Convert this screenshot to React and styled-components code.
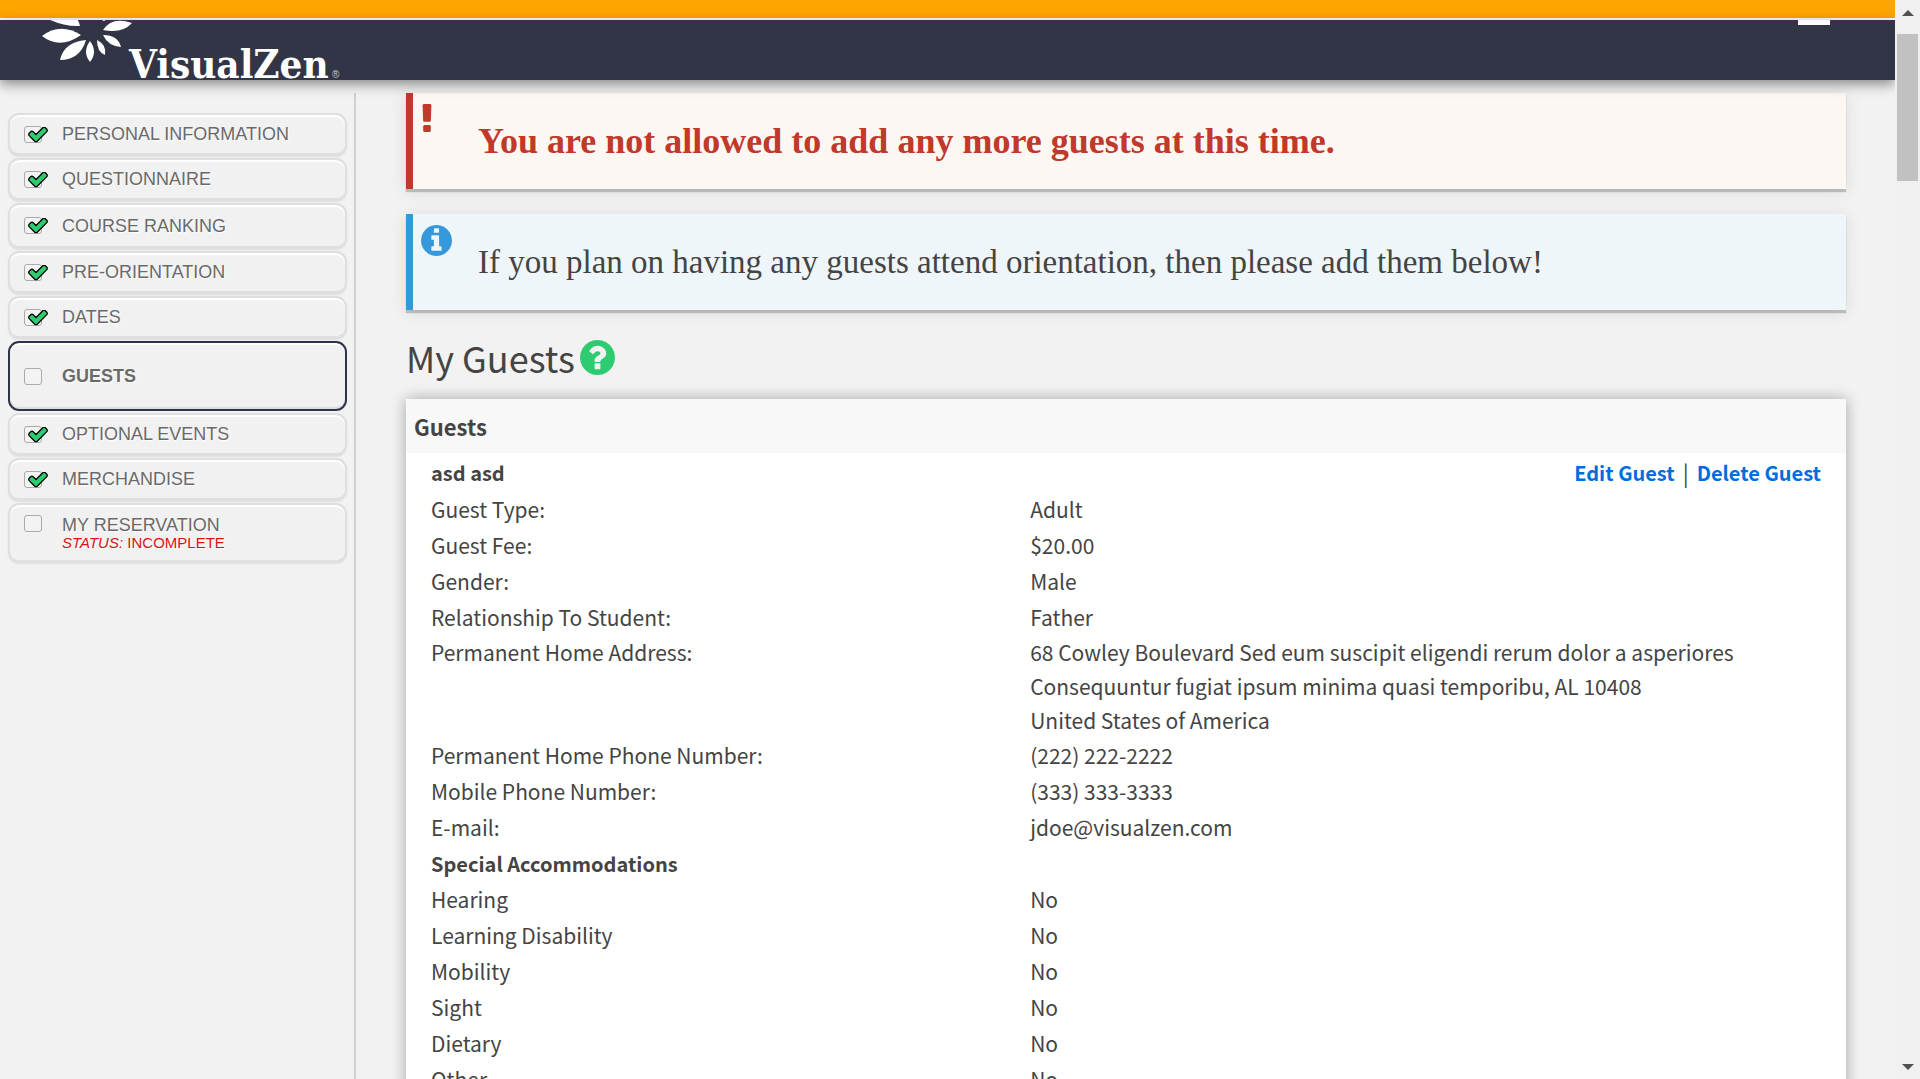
import React from "react";
import styled, { createGlobalStyle, css } from "styled-components";

const GlobalStyle = createGlobalStyle`
  *, *::before, *::after { box-sizing: border-box; }
  body {
    margin: 0;
    background: #f2f2f2;
    color: #444;
    font-family: "Noto Sans CJK SC", "Open Sans", sans-serif;
    font-size: 21px;
    line-height: 34px;
  }
`;

const Shell = styled.div`
  display: flex;
  height: 100vh;
  overflow: hidden;
`;

const Page = styled.div`
  flex: 1;
  min-width: 0;
  display: flex;
  flex-direction: column;
  overflow: hidden;
`;

const Banner = styled.div`
  flex: none;
  height: 20px;
  background: #ffa500;
  border-bottom: 2px solid #fff;
`;

const Header = styled.header`
  flex: none;
  position: relative;
  z-index: 1;
  display: flex;
  justify-content: space-between;
  align-items: flex-start;
  height: 60px;
  padding: 0 65px 0 40px;
  background: #323546;
  box-shadow: 0 4px 12px rgba(0, 0, 0, 0.45);
`;

const HomeLink = styled.a`
  display: block;
  height: 60px;
  > svg { display: block; overflow: visible; }
`;

const MenuButton = styled.button`
  width: 32px;
  height: 5px;
  padding: 0;
  border: 0;
  background: #fff;
`;

const Body = styled.div`
  flex: 1;
  min-height: 0;
  display: flex;
  padding-top: 13px;
  overflow: hidden;
`;

const Sidebar = styled.nav`
  flex: none;
  width: 356px;
  padding: 20px 7px 0 8px;
  border-right: 2px solid #d0d0d0;
`;

const Steps = styled.ul`
  display: flex;
  flex-direction: column;
  gap: 2px;
  margin: 0;
  padding: 0;
  list-style: none;
`;

const Step = styled.li`
  display: flex;
  align-items: ${(p) => (p.$size === "detail" ? "flex-start" : "center")};
  gap: 20px;
  height: ${(p) => ({ tall: 46, current: 70, detail: 60 }[p.$size] || 43)}px;
  padding: ${(p) => (p.$size === "detail" ? "10px" : "0")} 14px 0;
  border: 2px solid #dfdfdf;
  border-bottom-width: 3px;
  border-radius: 11px;
  background: #f1f1f1;
  box-shadow: inset 0 2px 1px #fff, 0 1px 2px rgba(0, 0, 0, 0.08);
  ${(p) =>
    p.$size === "current" &&
    css`
      border: 2px solid #2f3349;
      font-weight: bold;
      box-shadow: inset 0 2px 1px #fff, inset 0 -2px 1px #ddd;
    `}
`;

const TickWrap = styled.span`
  position: relative;
  flex: none;
  display: flex;
  width: 18px;
  height: 17px;
  svg {
    position: absolute;
    left: 4px;
    top: 1px;
    pointer-events: none;
  }
`;

const TickBox = styled.input`
  appearance: none;
  width: 18px;
  height: 17px;
  margin: 0;
  border: 1px solid #aaa;
  border-radius: 3px;
  background: #f3f3f3;
`;

const StepLink = styled.a`
  display: block;
  color: #6a6a6a;
  font-family: "Liberation Sans", Arial, sans-serif;
  font-size: 18px;
  line-height: 20px;
  text-decoration: none;
  text-transform: uppercase;
  text-shadow: 1px 1px 1px #fff;
`;

const StepStatus = styled.span`
  display: block;
  color: #e01010;
  font-size: 15px;
  line-height: 16px;
`;

const Main = styled.main`
  flex: 1;
  min-width: 0;
  padding: 0 49px 0 50px;
`;

const tones = {
  error: { bar: "#c0392b", back: "#fdf7f3", text: "#c0392b" },
  info: { bar: "#3498db", back: "#eff6fa", text: "#444" },
};

const Alert = styled.section`
  display: flex;
  height: 96px;
  margin-bottom: 25px;
  border-left: 7px solid ${(p) => tones[p.$tone].bar};
  background: ${(p) => tones[p.$tone].back};
  color: ${(p) => tones[p.$tone].text};
  box-shadow: 0 3px 1px rgba(0, 0, 0, 0.2), 0 2px 16px rgba(0, 0, 0, 0.1);
`;

const AlertIcon = styled.span`
  flex: none;
  width: 65px;
  padding: 11px 0 0 8px;
  color: ${(p) => tones[p.$tone].bar};
  svg { display: block; fill: currentColor; }
`;

const AlertText = styled.p`
  align-self: center;
  margin: 0;
  font-family: "Liberation Serif", serif;
  font-size: ${(p) => (p.$tone === "error" ? 36 : 33)}px;
  font-weight: ${(p) => (p.$tone === "error" ? "bold" : "normal")};
  line-height: 40px;
`;

const Title = styled.h1`
  display: flex;
  align-items: center;
  gap: 5px;
  margin: 0;
  height: 64px;
  padding-bottom: 20px;
  font-size: 36px;
  font-weight: normal;
`;

const HelpButton = styled.button`
  display: flex;
  padding: 0;
  border: 0;
  background: none;
  color: #2ecc71;
  svg { display: block; fill: currentColor; }
`;

const Card = styled.section`
  background: #fff;
  box-shadow: 0 0 14px rgba(0, 0, 0, 0.32);
`;

const CardHead = styled.h2`
  margin: 0;
  height: 54px;
  padding-left: 8px;
  background: #f8f8f8;
  font-size: 22px;
  line-height: 54px;
`;

const GuestBar = styled.div`
  display: flex;
  justify-content: space-between;
  height: 38px;
  padding: 3px 25px 0;
  font-size: 20px;
`;

const GuestName = styled.h3`
  margin: 0;
  font-size: 20px;
`;

const Actions = styled.div`
  display: flex;
  gap: 8px;
`;

const Divider = styled.span`
  font-size: 22px;
  line-height: 32px;
`;

const ActionLink = styled.a`
  color: #006dde;
  font-weight: bold;
  text-decoration: none;
`;

const Details = styled.table`
  width: 100%;
  border-collapse: collapse;
  table-layout: fixed;
`;

const Label = styled.th`
  width: 43%;
  height: ${(p) => (p.$multi ? 34 : 36)}px;
  padding: 0 0 0 25px;
  font-weight: normal;
  text-align: left;
  vertical-align: ${(p) => (p.$multi ? "top" : "middle")};
`;

const Value = styled.td`
  padding: 0 0 0 5px;
`;

const Group = styled.th`
  height: 36px;
  padding: 2px 0 0 25px;
  font-size: 20px;
  text-align: left;
`;

const Scrollbar = styled.div`
  flex: none;
  display: flex;
  flex-direction: column;
  align-items: center;
  width: 25px;
  padding: 10px 2px 9px;
  background: #f0f0f0;
`;

const Thumb = styled.div`
  align-self: stretch;
  height: 147px;
  margin: 18px 0 auto 0;
  background: #c1c1c1;
`;

const Arrow = styled.span`
  width: 0;
  border: solid transparent;
  border-width: 0 6px;
  ${(p) => (p.$down ? "border-top: 6px solid #505050;" : "border-bottom: 6px solid #505050;")}
`;

const ring =
  "m0 0q0 209-103 385.5t-279.5 279.5-385.5 103-385.5-103-279.5-279.5-103-385.5 103-385.5 279.5-279.5 385.5-103 385.5 103 279.5 279.5 103 385.5z";

const icons = {
  exclamation: {
    box: "672 128 448 1408",
    d: "M1088 1248v224q0 26-19 45t-45 19h-256q-26 0-45-19t-19-45v-224q0-26 19-45t45-19h256q26 0 45 19t19 45zm30-1056l-28 768q-1 26-20.5 45t-45.5 19h-256q-26 0-45.5-19t-20.5-45l-28-768q-1-26 17.5-45t44.5-19h320q26 0 44.5 19t17.5 45z",
  },
  info: {
    box: "128 128 1536 1536",
    d: "M1152 1376v-160q0-14-9-23t-23-9h-96v-512q0-14-9-23t-23-9h-320q-14 0-23 9t-9 23v160q0 14 9 23t23 9h96v320h-96q-14 0-23 9t-9 23v160q0 14 9 23t23 9h448q14 0 23-9t9-23zm-128-896v-160q0-14-9-23t-23-9h-192q-14 0-23 9t-9 23v160q0 14 9 23t23 9h192q14 0 23-9t9-23zm640 416" + ring,
  },
  question: {
    box: "128 128 1536 1536",
    d: "M1024 1376v-192q0-14-9-23t-23-9h-192q-14 0-23 9t-9 23v192q0 14 9 23t23 9h192q14 0 23-9t9-23zm256-672q0-88-55.5-163t-138.5-116-170-41q-243 0-371 213-15 24 8 42l132 100q7 6 19 6 16 0 25-12 53-68 86-92 34-24 86-24 48 0 85.5 26t37.5 59q0 38-20 61t-68 45q-63 28-115.5 86.5t-52.5 125.5v36q0 14 9 23t23 9h192q14 0 23-9t9-23q0-19 21.5-49.5t54.5-49.5q32-18 49-28.5t46-35 44.5-48 28-60.5 12.5-81zm384 192" + ring,
  },
};

const Icon = ({ name, width, height }) => (
  <svg width={width} height={height} viewBox={icons[name].box} aria-hidden="true">
    <path d={icons[name].d} />
  </svg>
);

const Check = () => (
  <svg width="20" height="16" viewBox="0 260 1792 1434" aria-hidden="true">
    <path
      fill="#2ecc71"
      stroke="#000"
      strokeWidth="230"
      strokeLinejoin="round"
      paintOrder="stroke"
      d="M1671 566q0 40-28 68l-724 724-136 136q-28 28-68 28t-68-28l-136-136-362-362q-28-28-28-68t28-68l136-136q28-28 68-28t68 28l294 295 656-657q28-28 68-28t68 28l136 136q28 28 28 68z"
    />
  </svg>
);

const Logo = () => (
  <svg width="304" height="60" viewBox="40 20 304 60" role="img" aria-label="VisualZen">
    <svg x="40" y="20" width="100" height="60" viewBox="40 20 100 60" fill="#fff">
      <path d="M46 18Q64 27 80 26Q79 20 72 12Z" />
      <path d="M42 36Q60 22 81 35Q60 50 42 36Z" />
      <path d="M60 60Q64 42 86 40Q80 60 60 60Z" />
      <path d="M90 41Q98 52 90 62Q82 52 90 41Z" />
      <path d="M97 40Q107 45 105 55Q97 52 97 40Z" />
      <path d="M103 35Q118 35 121 47Q108 46 103 35Z" />
      <path d="M103 30Q112 16 132 23Q122 34 103 30Z" />
      <path d="M102 20L109 18L104 21Z" />
    </svg>
    <g fill="#fff">
      <text x="129" y="78" fontFamily="DejaVu Serif Condensed, DejaVu Serif, serif" fontWeight="bold" fontSize="40">
        VisualZen
      </text>
      <text x="332" y="78" fontFamily="Liberation Sans, Arial, sans-serif" fontSize="10" opacity="0.7">
        ®
      </text>
    </g>
  </svg>
);

const steps = [
  { name: "Personal Information", done: true },
  { name: "Questionnaire", done: true },
  { name: "Course Ranking", done: true, size: "tall" },
  { name: "Pre-Orientation", done: true },
  { name: "Dates", done: true },
  { name: "Guests", size: "current" },
  { name: "Optional Events", done: true },
  { name: "Merchandise", done: true },
  { name: "My Reservation", size: "detail", status: "Incomplete" },
];

const profile = [
  ["Guest Type:", "Adult"],
  ["Guest Fee:", "$20.00"],
  ["Gender:", "Male"],
  ["Relationship To Student:", "Father"],
  [
    "Permanent Home Address:",
    "68 Cowley Boulevard Sed eum suscipit eligendi rerum dolor a asperiores",
    "Consequuntur fugiat ipsum minima quasi temporibu, AL 10408",
    "United States of America",
  ],
  ["Permanent Home Phone Number:", "(222) 222-2222"],
  ["Mobile Phone Number:", "(333) 333-3333"],
  ["E-mail:", "jdoe@visualzen.com"],
];

const accommodations = ["Hearing", "Learning Disability", "Mobility", "Sight", "Dietary", "Other"];

const DetailRow = ({ label, lines }) => (
  <tr>
    <Label scope="row" $multi={lines.length > 1}>{label}</Label>
    <Value>
      {lines.map((line) => (
        <div key={line}>{line}</div>
      ))}
    </Value>
  </tr>
);

export default function App() {
  return (
    <>
      <GlobalStyle />
      <Shell>
        <Page>
          <Banner />
          <Header>
            <HomeLink href="#home"><Logo /></HomeLink>
            <MenuButton type="button" aria-label="Menu" />
          </Header>
          <Body>
            <Sidebar aria-label="Steps">
              <Steps>
                {steps.map((s) => (
                  <Step key={s.name} $size={s.size}>
                    <TickWrap>
                      <TickBox type="checkbox" checked={!!s.done} readOnly aria-label={s.name} />
                      {s.done && <Check />}
                    </TickWrap>
                    <StepLink href="#step">
                      {s.name}
                      {s.status && <StepStatus><em>Status:</em> {s.status}</StepStatus>}
                    </StepLink>
                  </Step>
                ))}
              </Steps>
            </Sidebar>
            <Main>
              <Alert $tone="error">
                <AlertIcon $tone="error"><Icon name="exclamation" width={12} height={28} /></AlertIcon>
                <AlertText $tone="error">You are not allowed to add any more guests at this time.</AlertText>
              </Alert>
              <Alert $tone="info">
                <AlertIcon $tone="info"><Icon name="info" width={31} height={31} /></AlertIcon>
                <AlertText $tone="info">If you plan on having any guests attend orientation, then please add them below!</AlertText>
              </Alert>
              <Title>
                My Guests
                <HelpButton type="button" aria-label="Help"><Icon name="question" width={35} height={35} /></HelpButton>
              </Title>
              <Card>
                <CardHead>Guests</CardHead>
                <GuestBar>
                  <GuestName>asd asd</GuestName>
                  <Actions>
                    <ActionLink href="#edit">Edit Guest</ActionLink>
                    <Divider>|</Divider>
                    <ActionLink href="#delete">Delete Guest</ActionLink>
                  </Actions>
                </GuestBar>
                <Details>
                  <tbody>
                    {profile.map(([label, ...lines]) => (
                      <DetailRow key={label} label={label} lines={lines} />
                    ))}
                    <tr><Group colSpan={2}>Special Accommodations</Group></tr>
                    {accommodations.map((label) => (
                      <DetailRow key={label} label={label} lines={["No"]} />
                    ))}
                  </tbody>
                </Details>
              </Card>
            </Main>
          </Body>
        </Page>
        <Scrollbar aria-hidden="true">
          <Arrow />
          <Thumb />
          <Arrow $down />
        </Scrollbar>
      </Shell>
    </>
  );
}
